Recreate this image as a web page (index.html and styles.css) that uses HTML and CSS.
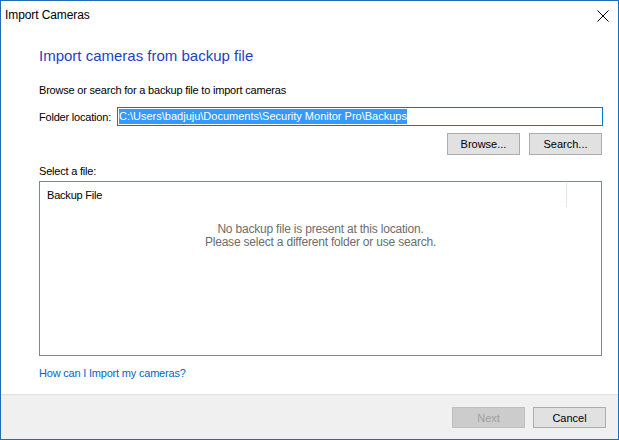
FILE: index.html
```html
<!DOCTYPE html>
<html>
<head>
<meta charset="utf-8">
<link rel="stylesheet" href="styles.css">
</head>
<body>
<div class="window">
  <div class="titlebar">
    <span class="title">Import Cameras</span>
    <svg class="close" width="12" height="12" viewBox="0 0 12 12"><path d="M0.5 0.5 L11.5 11.5 M11.5 0.5 L0.5 11.5" stroke="#000" stroke-width="1" fill="none"/></svg>
  </div>
  <div class="content">
    <h1 class="heading">Import cameras from backup file</h1>
    <p class="instr">Browse or search for a backup file to import cameras</p>
    <div class="folder-row">
      <label class="label">Folder location:</label>
      <div class="textbox"><span class="sel">C:\Users\badjuju\Documents\Security Monitor Pro\Backups</span></div>
    </div>
    <div class="btn-row">
      <button class="btn">Browse...</button>
      <button class="btn">Search...</button>
    </div>
    <p class="select-label">Select a file:</p>
    <div class="listbox">
      <div class="list-header">
        <span class="col">Backup File</span>
        <span class="col-sep"></span>
      </div>
      <div class="empty">
        <div>No backup file is present at this location.</div>
        <div>Please select a different folder or use search.</div>
      </div>
    </div>
    <a class="help" href="#">How can I Import my cameras?</a>
  </div>
  <div class="footer">
    <button class="btn fbtn disabled">Next</button>
    <button class="btn fbtn">Cancel</button>
  </div>
</div>
</body>
</html>
```

FILE: styles.css
```css
html, body {
  margin: 0;
  padding: 0;
  background: #fff;
}
body {
  font-family: "Liberation Sans", Arial, sans-serif;
  font-size: 11px;
  letter-spacing: -0.2px;
  color: #000;
}
.window {
  box-sizing: border-box;
  width: 619px;
  height: 440px;
  border: 1px solid #1f6db5;
  display: flex;
  flex-direction: column;
  background: #fff;
}
.titlebar {
  height: 28px;
  display: flex;
  align-items: center;
  justify-content: space-between;
  padding: 0 9px 0 4px;
  flex: none;
}
.title {
  font-size: 12px;
  letter-spacing: -0.1px;
}
.close {
  display: block;
  margin-top: 1px;
}
.content {
  flex: 1;
  padding: 0 15px 0 38px;
  display: flex;
  flex-direction: column;
}
.heading {
  margin: 17px 0 0 0;
  font-weight: normal;
  font-size: 15px;
  line-height: 20px;
  color: #1e3fc8;
  letter-spacing: 0;
}
.instr {
  margin: 16px 0 0 0;
  line-height: 16px;
}
.folder-row {
  margin-top: 9px;
  display: flex;
  align-items: center;
  height: 19px;
}
.label {
  width: 78px;
  flex: none;
  white-space: nowrap;
}
.textbox {
  box-sizing: border-box;
  flex: 1;
  height: 19px;
  border: 1px solid #0078d7;
  padding: 1px 1px;
  display: flex;
  align-items: center;
}
.sel {
  background: #3399ff;
  color: #fff;
  line-height: 15px;
  letter-spacing: 0;
  white-space: nowrap;
}
.btn-row {
  margin-top: 7px;
  display: flex;
  justify-content: flex-end;
  gap: 9px;
  padding-right: 1px;
}
.btn {
  box-sizing: border-box;
  width: 73px;
  height: 22px;
  background: #e1e1e1;
  border: 1px solid #adadad;
  font-family: "Liberation Sans", Arial, sans-serif;
  font-size: 11px;
  letter-spacing: 0;
  color: #000;
  padding: 0;
}
.select-label {
  margin: 8px 0 0 0;
  line-height: 16px;
}
.listbox {
  box-sizing: border-box;
  margin-top: 2px;
  margin-right: 1px;
  height: 175px;
  border: 1px solid #828790;
  display: flex;
  flex-direction: column;
}
.list-header {
  height: 24px;
  display: flex;
  align-items: center;
  justify-content: space-between;
  padding: 0 34px 0 7px;
  flex: none;
}
.col {
  margin-top: 1px;
}
.col-sep {
  width: 1px;
  height: 24px;
  background: #e5e5e5;
  align-self: flex-start;
  margin-top: 1px;
}
.empty {
  margin-top: 17px;
  text-align: center;
  color: #6d6d6d;
  font-size: 12px;
  line-height: 13px;
  letter-spacing: -0.2px;
}
.help {
  margin-top: 9px;
  color: #0066cc;
  text-decoration: none;
  line-height: 16px;
  align-self: flex-start;
}
.footer {
  flex: none;
  height: 45px;
  border-top: 1px solid #dfdfdf;
  background: #f0f0f0;
  display: flex;
  justify-content: flex-end;
  align-items: flex-start;
  gap: 8px;
  padding: 12px 12px 0 0;
  box-sizing: border-box;
}
.fbtn {
  height: 21px;
}
.fbtn.disabled {
  background: #cccccc;
  border-color: #bfbfbf;
  color: #a0a0a0;
}
```
